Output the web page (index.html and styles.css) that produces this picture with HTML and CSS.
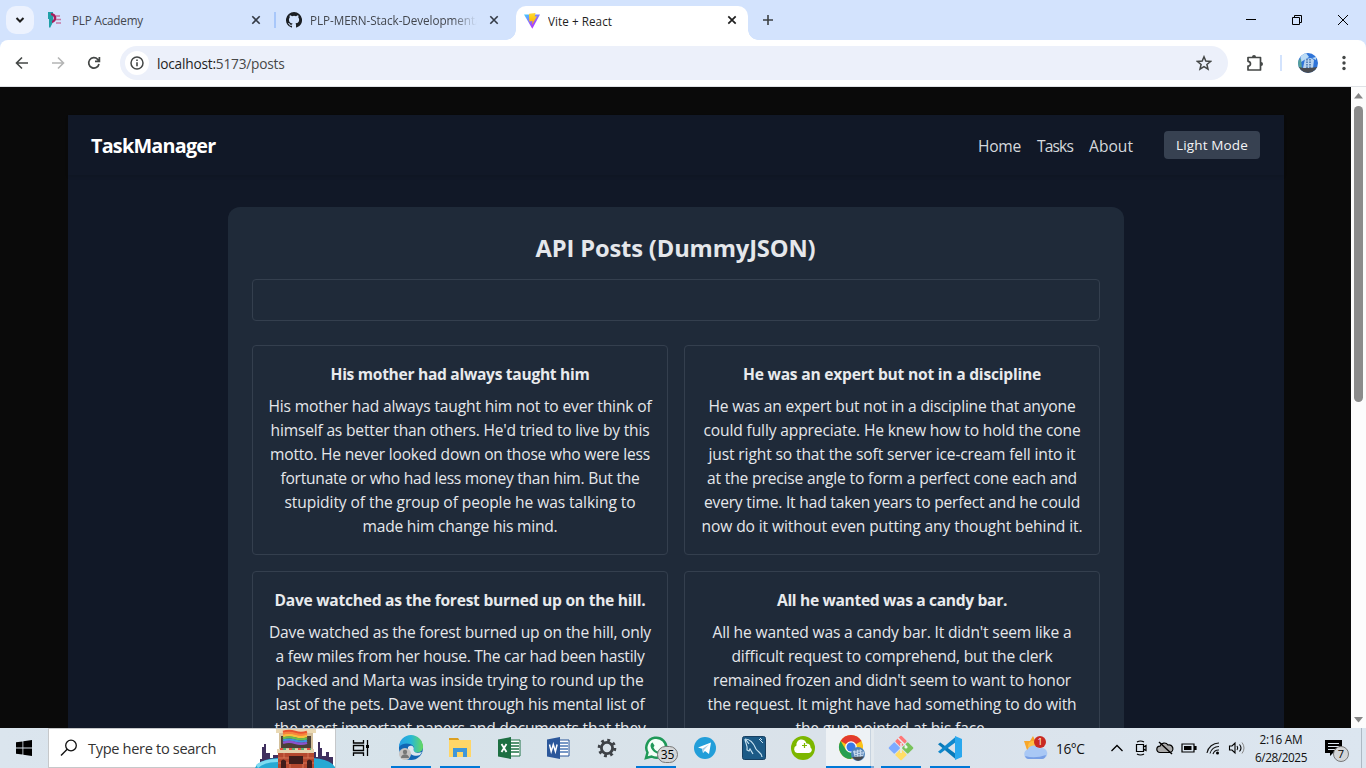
FILE: index.html
```html
<!DOCTYPE html>
<html lang="en">
<head>
<meta charset="utf-8">
<title>Vite + React</title>
<link rel="stylesheet" href="styles.css">
</head>
<body>
<div class="tabstrip">
  <div class="tabsearch"><svg width="12" height="12" viewBox="0 0 12 12"><path d="M2.500 4l3.500 3.500L9.500 4" fill="none" stroke="#1f1f1f" stroke-width="2"/></svg></div>
  <div class="tab tab-first">
    <svg class="fav" width="16" height="16" viewBox="0 0 16 16"><path d="M0 0h5v10l-3 6-1-1V7H0z" fill="#20a0a8"/><path d="M3 1c7 0 7 9 1 10V9c3-2 2-5-1-6z" fill="#a81e5c"/><path d="M8 4h4M8 7.500h5M8 11h5" stroke="#c778a4" stroke-width="1.500"/></svg>
    <span class="tabname"><span data-w="71">PLP Academy</span></span>
    <svg class="x" width="10" height="10" viewBox="0 0 10 10"><path d="M1.300 1.300l7.400 7.400M8.700 1.300L1.300 8.700" stroke="#333a45" stroke-width="1.600"/></svg>
  </div>
  <div class="sep"></div>
  <div class="tab tab-second">
    <svg class="fav" width="16" height="16" viewBox="0 0 16 16"><path fill="#1b1f24" d="M8 0a8 8 0 0 0-2.530 15.590c.4.070.550-.170.550-.380v-1.490c-2.010.370-2.530-.490-2.690-.940-.090-.230-.480-.940-.820-1.130-.280-.150-.680-.520-.010-.530.630-.010 1.080.580 1.230.820.720 1.210 1.870.870 2.330.660.070-.520.280-.870.510-1.070-1.780-.2-3.640-.890-3.640-3.950 0-.870.310-1.590.820-2.150-.080-.2-.360-1.020.080-2.120 0 0 .670-.210 2.200.820a7.500 7.500 0 0 1 4 0c1.530-1.040 2.200-.820 2.200-.820.440 1.100.160 1.920.080 2.120.510.560.820 1.270.820 2.150 0 3.070-1.870 3.750-3.650 3.950.290.250.540.730.540 1.480v2.200c0 .210.150.460.550.380A8 8 0 0 0 8 0z"/></svg>
    <span class="tabname fade"><span data-w="165">PLP-MERN-Stack-Development</span>/</span>
    <svg class="x" width="10" height="10" viewBox="0 0 10 10"><path d="M1.300 1.300l7.400 7.400M8.700 1.300L1.300 8.700" stroke="#333a45" stroke-width="1.600"/></svg>
  </div>
  <div class="tab tab-active">
    <svg class="fav" width="16" height="16" viewBox="0 0 16 16"><defs><linearGradient id="v" x1="0" x2=".7" y1="0" y2="1"><stop stop-color="#41d1ff"/><stop offset=".7" stop-color="#a04cfe"/><stop offset="1" stop-color="#bd34fe"/></linearGradient><linearGradient id="b" x1="0" x2="0" y1="0" y2="1"><stop stop-color="#ffd83a"/><stop offset=".3" stop-color="#ffcf20"/><stop offset="1" stop-color="#ffa800"/></linearGradient></defs><path d="M0 1.500L16 1.500 8.300 15.700z" fill="url(#v)"/><path d="M5 .800L11.500 0l-.800 3.500 2.300-.300L8 12l.600-4-3.300.400z" fill="url(#b)"/></svg>
    <span class="tabname dark"><span data-w="64">Vite + React</span></span>
    <svg class="x" width="10" height="10" viewBox="0 0 10 10"><path d="M1.300 1.300l7.400 7.400M8.700 1.300L1.300 8.700" stroke="#1f1f1f" stroke-width="1.700"/></svg>
  </div>
  <svg class="plus" width="12" height="12" viewBox="0 0 12 12"><path d="M6 1v10M1 6h10" stroke="#3c4043" stroke-width="1.600"/></svg>
  <div class="winbtns">
    <svg width="12" height="12" viewBox="0 0 12 12"><path d="M1 5.500h10" stroke="#000"/></svg>
    <svg width="12" height="12" viewBox="0 0 12 12"><path d="M1.500 3.500h7v7h-7zM3.500 3.500v-2h7v7h-2" fill="none" stroke="#000"/></svg>
    <svg width="12" height="12" viewBox="0 0 12 12"><path d="M1 1l10 10M11 1L1 11" stroke="#000"/></svg>
  </div>
</div>
<div class="toolbarwrap">
<div class="toolbar">
  <svg class="nav-ic" width="14" height="14" viewBox="0 0 14 14"><path d="M13 7H2M7 1.500L1.500 7 7 12.500" fill="none" stroke="#444746" stroke-width="1.600"/></svg>
  <svg class="nav-ic" width="14" height="14" viewBox="0 0 14 14"><path d="M1 7h11M7 1.500L12.500 7 7 12.500" fill="none" stroke="#b4b5b5" stroke-width="1.600"/></svg>
  <svg class="nav-ic" width="14" height="14" viewBox="0 0 14 14"><path d="M12 8A5.200 5.200 0 1 1 10.700 3.300L12.300 5M12.400 1v4.300H8" fill="none" stroke="#444746" stroke-width="1.700"/></svg>
  <div class="omnibox">
    <div class="info"><svg width="14" height="14" viewBox="0 0 14 14"><circle cx="7" cy="7" r="6" fill="none" stroke="#444746" stroke-width="1.500"/><path d="M7 6.200v4M7 3.600v1.500" stroke="#444746" stroke-width="1.600"/></svg></div>
    <span class="url" data-w="127.500"><b>localhost:</b>5173/posts</span>
    <svg class="star" width="16" height="16" viewBox="0 0 16 16"><path d="M8 1.800l1.800 4.300 4.700.400-3.600 3 1.100 4.600-4-2.500-4 2.500 1.100-4.600-3.600-3 4.700-.400z" fill="none" stroke="#444746" stroke-width="1.500"/></svg>
  </div>
  <svg class="ext" width="18" height="18" viewBox="0 0 18 18"><path d="M2 3.500h12.500V16H2v-3.800c3.300-.200 3.300-4.700 0-4.900z" fill="none" stroke="#444746" stroke-width="1.700" stroke-linejoin="round"/><path d="M6 3a2 2 0 0 1 4 0zM15 8a2 2 0 0 1 0 4z" fill="#444746"/></svg>
  <div class="tsep"></div>
  <svg class="avatar" width="20" height="20" viewBox="0 0 20 20"><defs><clipPath id="c"><circle cx="10" cy="10" r="10"/></clipPath></defs><g clip-path="url(#c)"><path d="M0 0h20v20H0z" fill="#2f74d8"/><path d="M2 0h6l3 4-8 5zM14 5l4-1v3z" fill="#bcdcf5"/><path d="M0 7l3-1 1 9H0z" fill="#57a09a"/><path d="M7 6l6-1 3 2-1 8H5z" fill="#b9d3ed"/><path d="M9 6v9M12 6v9" stroke="#24599b" stroke-width="1.200" stroke-dasharray="1.500 1"/><path d="M0 14l6 1 5 0 9-1v7H0z" fill="#4a4c50"/></g></svg>
  <svg class="dots" width="4" height="16" viewBox="0 0 4 16"><g fill="#444746"><circle cx="2" cy="2.500" r="1.700"/><circle cx="2" cy="8" r="1.700"/><circle cx="2" cy="13.500" r="1.700"/></g></svg>
</div>
</div>
<div class="viewport">
  <div class="page">
    <div class="app">
      <header class="header">
        <h1 data-w="124.500">TaskManager</h1>
        <nav><a data-w="43">Home</a><a data-w="36">Tasks</a><a data-w="44">About</a></nav>
        <button class="mode"><span data-w="72">Light Mode</span></button>
      </header>
      <main class="panel">
        <h2><span data-w="280">API Posts (DummyJSON)</span></h2>
        <div class="search"></div>
        <div class="grid">
          <article><h3><span data-w="259">His mother had always taught him</span></h3><p><span data-w="383">His mother had always taught him not to ever think of</span><br><span data-w="379">himself as better than others. He'd tried to live by this</span><br><span data-w="380">motto. He never looked down on those who were less</span><br><span data-w="359">fortunate or who had less money than him. But the</span><br><span data-w="351">stupidity of the group of people he was talking to</span><br><span data-w="195">made him change his mind.</span></p></article>
          <article><h3><span data-w="298">He was an expert but not in a discipline</span></h3><p><span data-w="367">He was an expert but not in a discipline that anyone</span><br><span data-w="377">could fully appreciate. He knew how to hold the cone</span><br><span data-w="367">just right so that the soft server ice-cream fell into it</span><br><span data-w="370">at the precise angle to form a perfect cone each and</span><br><span data-w="376">every time. It had taken years to perfect and he could</span><br><span data-w="381">now do it without even putting any thought behind it.</span></p></article>
          <article><h3><span data-w="371">Dave watched as the forest burned up on the hill.</span></h3><p><span data-w="382">Dave watched as the forest burned up on the hill, only</span><br><span data-w="369">a few miles from her house. The car had been hastily</span><br><span data-w="367">packed and Marta was inside trying to round up the</span><br><span data-w="369">last of the pets. Dave went through his mental list of</span><br><span data-w="371">the most important papers and documents that they</span></p></article>
          <article><h3><span data-w="230">All he wanted was a candy bar.</span></h3><p><span data-w="359">All he wanted was a candy bar. It didn't seem like a</span><br><span data-w="321">difficult request to comprehend, but the clerk</span><br><span data-w="358">remained frozen and didn't seem to want to honor</span><br><span data-w="369">the request. It might have had something to do with</span><br><span data-w="193">the gun pointed at his face.</span></p></article>
        </div>
      </main>
    </div>
  </div>
  <div class="scroll">
    <svg width="9" height="6" viewBox="0 0 9 6"><path d="M0 5.500L4.500 0 9 5.500z" fill="#858585"/></svg>
    <div class="thumb"></div>
    <svg class="down" width="9" height="6" viewBox="0 0 9 6"><path d="M0 0L4.500 5.500 9 0z" fill="#858585"/></svg>
  </div>
</div>
<div class="taskbar">
  <div class="start"><svg width="16" height="16" viewBox="0 0 16 16"><path d="M0 2.300L6.500 1.400v6.200H0zM7.300 1.300L16 0v7.600H7.300zM0 8.400h6.500v6.200L0 13.700zM7.300 8.400H16V16l-8.700-1.300z"/></svg></div>
  <div class="find">
    <svg class="mag" width="18" height="18" viewBox="0 0 18 18"><circle cx="11" cy="6.500" r="5.300" fill="none" stroke="#111" stroke-width="1.300"/><path d="M7.200 10.300L1 16.500" stroke="#111" stroke-width="1.400"/></svg>
    <span data-w="128">Type here to search</span>
    <svg class="art" width="80" height="39" viewBox="0 0 80 39"><path d="M5 36v-6h2v-12h2v-3h2v9h4v5h3v-3h6v11zM58 36v-13h3v5h2v-15h2v6h2v8h4v-4h3v5h4v8z" fill="#40305f"/><path d="M0 39q4-9 22-10h36q17 1 22 9v1z" fill="#27a9d3"/><path d="M1 36q7-6 22-6v3q-14 0-20 6z" fill="#7fdbf1"/><path d="M24 4h34v21H24z" fill="#d3bf9a"/><path d="M21 0h40v4H21z" fill="#ead9b4"/><path d="M26 7h30v12H26z" fill="#4a4038"/><path d="M22 20h37v4H22z" fill="#e5d3ae"/><path d="M23 24h36v15H23z" fill="#b5492f"/><path d="M23 29h36M23 34h36M29 24v5M53 24v5M35 34v5M48 34v5" stroke="#df8260" stroke-width=".8"/><path d="M34 27h14v8H34zM26 39v-7q2-3 5 0v7zM52 39v-7q2-3 5 0v7z" fill="#3f1d1b"/><g fill="none" stroke-width="2.400"><path d="M28 3q6-2 12 0t12 0" stroke="#e9532f"/><path d="M28 5q6-2 12 0t12 0" stroke="#f7843d"/><path d="M28 7.200q6-2 12 0t12 0" stroke="#f9bf3b"/><path d="M28 9.400q6-2 12 0t12 0" stroke="#69be4f"/><path d="M28 11.600q6-2 12 0t12 0" stroke="#3e93df"/><path d="M28 13.800q6-2 12 0t12 0" stroke="#8b52cd"/></g><path d="M25 20h32" stroke="#e65442" stroke-width="2" stroke-dasharray="3 6"/><path d="M28 20h28" stroke="#5aae75" stroke-width="2" stroke-dasharray="3 6"/></svg>
  </div>
  <div class="apps">
    <div class="ap"><svg width="18" height="18" viewBox="0 0 18 18"><path d="M1.500 1v3h10V1M1.500 6.500h10v5h-10zM1.500 17v-3h10v3M15.500 1v16" fill="none" stroke="#000" stroke-width="1.300"/><path d="M14 6h3v3h-3z"/></svg></div>
    <div class="ap on"><svg width="26" height="26" viewBox="0 0 26 26"><defs><linearGradient id="e" x1="0" x2="1"><stop stop-color="#269ee6"/><stop offset=".5" stop-color="#28b7d5"/><stop offset="1" stop-color="#66d95d"/></linearGradient></defs><circle cx="13" cy="13" r="12" fill="#1166b4"/><path d="M1 12A12 12 0 0 1 25 12c0 6-8 7-10 4 5-6-8-11-14-4z" fill="url(#e)"/><path d="M10 12c3-3 7-.500 5.500 3 1 4 6 3 8.500 2l-2 3c-4 2-11 0-12-5z" fill="#dce6ef"/><circle cx="7" cy="19" r="6" fill="#c5c2c1"/><circle cx="7" cy="17" r="2.200" fill="#777"/><path d="M3 23c0-5 8-5 8 0z" fill="#777"/></svg></div>
    <div class="ap on"><svg width="24" height="22" viewBox="0 0 24 22"><path d="M1 1h9l2 3H1z" fill="#dca021"/><path d="M1 3h22v17H1z" fill="#ffd667"/><path d="M5 20v-9h14v9h-4v-5H9v5z" fill="#3f97d9"/></svg></div>
    <div class="ap"><svg width="24" height="22" viewBox="0 0 24 22"><path d="M12 3h11v16H12z" fill="#fff" stroke="#217346"/><path d="M14 6h8M14 9h8M14 12h8M14 15h8" stroke="#217346" stroke-width="1.500"/><path d="M1 2.500L14 0v22L1 19.500z" fill="#1d6f42"/><path d="M4.500 7l5 8M9.500 7l-5 8" stroke="#fff" stroke-width="1.800"/></svg></div>
    <div class="ap"><svg width="24" height="22" viewBox="0 0 24 22"><path d="M12 3h11v16H12z" fill="#fff" stroke="#2b579a"/><path d="M14 6h8M14 9h8M14 12h8M14 15h8" stroke="#4c78b5" stroke-width="1.300"/><path d="M1 2.500L14 0v22L1 19.500z" fill="#2b579a"/><path d="M3.500 7.500l1.700 7 2.100-7 2.100 7 1.700-7" fill="none" stroke="#fff" stroke-width="1.500"/></svg></div>
    <div class="ap"><svg width="20" height="20" viewBox="0 0 20 20"><circle cx="10" cy="10" r="5.600" fill="none" stroke="#3e4247" stroke-width="2.800"/><circle cx="10" cy="10" r="7.800" fill="none" stroke="#3e4247" stroke-width="3" stroke-dasharray="2.800 3.326"/></svg></div>
    <div class="ap on"><svg width="24" height="24" viewBox="0 0 24 24"><path d="M2 22l1.500-5.500a10 10 0 1 1 4 4z" fill="#f4fff8" stroke="#1f9958" stroke-width="2.500"/><path d="M8.500 6.500l2 3-1 2c1 2 2 3 4 4l2-1.500 2.500 1.500c0 3-4 3-6 1.500-3-1.500-5-4-5.500-7 0-2 1-4 4-3.500z" fill="#1f9958"/></svg><span class="badge b35">35</span></div>
    <div class="ap"><svg width="22" height="22" viewBox="0 0 22 22"><circle cx="11" cy="11" r="11" fill="#229ed9"/><path d="M4 10.500L17 5.500l-2 11.500-4-3-2 2-.800-4.300z" fill="#fff"/><path d="M8.200 11.700L15 7.500l-5 5.500-1 3z" fill="#a9cde5"/></svg></div>
    <div class="ap"><svg width="24" height="24" viewBox="0 0 24 24"><rect x=".5" y=".5" width="23" height="23" rx="2" fill="#1c5a86" stroke="#173f61"/><path d="M3 3c6 0 9 5 11 10 2 3 6 4 6 8M3 3c0 4 3 6 2 11l2 1 1-2 3 5M4 4l3 4" fill="none" stroke="#c9e3f1" stroke-width="1.200"/><path d="M17 3l4 4M18 2l2 2" stroke="#c9e3f1"/></svg></div>
    <div class="ap"><svg width="24" height="24" viewBox="0 0 24 24"><circle cx="12" cy="12" r="12" fill="#7db700"/><path d="M6 17a4 4 0 0 1-.500-7.500 5 5 0 0 1 10-2 4 4 0 0 1 4 4 3 3 0 0 1-1.500 5.500z" fill="#fff"/><path d="M13.500 7v5M11 9.500h5" stroke="#7db700" stroke-width="1.200"/></svg></div>
    <div class="ap current"><svg width="28" height="28" viewBox="0 0 28 28"><circle cx="13" cy="13" r="12" fill="#fbc116"/><path d="M13 13L2.600 7A12 12 0 0 1 23.400 7z" fill="#e33b2e"/><path d="M2.600 7A12 12 0 0 0 13 25l5-9-5 2-5-2z" fill="#269f50"/><circle cx="13" cy="13" r="5.800" fill="#fff"/><circle cx="13" cy="13" r="4.500" fill="#3979e8"/><circle cx="20" cy="20" r="7" fill="#4d83bb"/><path d="M15 17l7-2 4 3-1 5-8 1z" fill="#c3d7ed"/><path d="M18 16v8M21 15v9M24 17v6" stroke="#315f95" stroke-dasharray="1.500 1"/><path d="M14 23l12-.500q-5 8-12 .500z" fill="#46494e"/></svg></div>
    <div class="ap on"><svg width="26" height="26" viewBox="0 0 26 26"><g transform="rotate(45 13 13)"><rect x="4" y="4" width="8.500" height="8.500" rx="1" fill="#ff7777"/><rect x="13.500" y="4" width="8.500" height="8.500" rx="1" fill="#78c35b"/><rect x="4" y="13.500" width="8.500" height="8.500" rx="1" fill="#7dabff"/><rect x="13.500" y="13.500" width="8.500" height="8.500" rx="1" fill="#ffdd66"/></g><path d="M10 3l8 8M13 8v10" stroke="#e8edf1" stroke-width="1.500"/><circle cx="18" cy="12" r="1.600" fill="#eef5ed"/></svg></div>
    <div class="ap on"><svg width="24" height="24" viewBox="0 0 24 24"><path d="M0 8.300l2.300-1.800L18 18v5.500z" fill="#087ab9"/><path d="M0 15.700l2.300 1.800L18 6V.500z" fill="#1088cc"/><path d="M17 0l7 3v18l-7 3z" fill="#2aa8ee"/></svg></div>
  </div>
  <div class="weather"><svg width="26" height="26" viewBox="0 0 26 26"><path d="M2 6l6 0 3-5 3 6v8H5z" fill="#f8a72b"/><circle cx="11" cy="11" r="5" fill="#ffbe42"/><path d="M6 24a5 5 0 0 1-.500-9.500 7 7 0 0 1 12-1 5.500 5.500 0 1 1 2.500 10.500z" fill="#a9c8f5"/><path d="M3 21q10 3 21-1-1 4-4 4H6q-2 0-3-3z" fill="#789fe5"/></svg><span class="red">1</span><span data-w="28.500">16°C</span></div>
  <div class="tray">
    <div><svg width="14" height="8" viewBox="0 0 14 8"><path d="M1.500 7L7 1.500 12.500 7" fill="none" stroke="#000" stroke-width="1.300"/></svg></div>
    <div><svg width="16" height="16" viewBox="0 0 16 16"><path d="M3.500 4.500h7v7h-7zM10.500 7l2.500-1.500v5L10.500 9M4 2q3.500-2 7 0M4 14q3.500 2 7 0" fill="none" stroke="#000" stroke-width="1.200"/></svg></div>
    <div><svg width="18" height="14" viewBox="0 0 18 14"><path d="M4 11.500a3.200 3.200 0 0 1 0-6.400A4.500 4.500 0 0 1 12 4a3.800 3.800 0 0 1 2 7.500z" fill="#aaa" stroke="#000" stroke-width="1.200"/><path d="M3 1l13 12" stroke="#000" stroke-width="1.400"/></svg></div>
    <div><svg width="16" height="10" viewBox="0 0 16 10"><path d="M1 1h12v8H1zM14 3.500h1v3h-1z" fill="none" stroke="#000" stroke-width="1.200"/><path d="M3 3h7.500v4H3z"/></svg></div>
    <div><svg width="14" height="14" viewBox="0 0 14 14"><path d="M1 12A12 12 0 0 1 13 2M4 12.500a9 9 0 0 1 9-7M7 13a6 6 0 0 1 6-4" fill="none" stroke="#111" stroke-width="1.100"/><circle cx="11.500" cy="12" r="1.500"/></svg></div>
    <div><svg width="18" height="14" viewBox="0 0 18 14"><path d="M1.500 5H4l3-3v10L4 9H1.500zM9 5q1.500 2 0 4M11.500 3.500q3 3.500 0 7" fill="none" stroke="#000" stroke-width="1.100"/><path d="M14 1.500q4 5.500 0 11" fill="none" stroke="#888"/></svg></div>
  </div>
  <div class="clock"><span data-w="43">2:16 AM</span><br><span data-w="52">6/28/2025</span></div>
  <div class="notif"><svg width="17" height="17" viewBox="0 0 17 17"><path d="M0 0h17v13H8l-3 3v-3H0z"/><path d="M3 3.500h11M3 6.500h11M3 9.500h7" stroke="#dce6ef"/></svg><span class="badge b7">7</span></div>
  <div class="peek"></div>
</div>
<script src="fit.js"></script>
</body>
</html>
```
FILE: fit.js
```js
// Spread each text run over its designed width.
document.querySelectorAll('[data-w]').forEach(function (el) {
  var want = parseFloat(el.dataset.w);
  var have = el.getBoundingClientRect().width;
  el.style.letterSpacing = (want - have) / el.textContent.length + 'px';
});
```
FILE: styles.css
```css
* { box-sizing: border-box; }
html, body { margin: 0; height: 768px; overflow: hidden; }
body { font-family: "Open Sans", "Noto Sans", sans-serif; font-size: 15.6px; display: flex; flex-direction: column; background: #fff; }
svg { display: block; flex: none; }
[data-w] { white-space: nowrap; }

.tabstrip { height: 40px; flex: none; background: #d3e3fd; display: flex; align-items: center; padding-left: 6px; font-size: 11.7px; color: #43474e; }
.tabsearch { width: 28px; height: 28px; border-radius: 10px; background: #ecf2fe; display: grid; place-items: center; }
.tab { display: flex; align-items: center; height: 40px; }
.tab .fav { margin-right: 8px; }
.tabname { flex: 1; white-space: nowrap; overflow: hidden; line-height: 20px; }
.tab-first { width: 226px; margin-left: 14px; padding-right: 13px; }
.tab-second { width: 213px; margin-left: 10px; }
.fade { -webkit-mask-image: linear-gradient(90deg, #000 85%, transparent 100%); mask-image: linear-gradient(90deg, #000 85%, transparent 100%); }
.tab-second .x { margin-left: 12px; }
.sep { width: 2px; height: 16px; background: #a8c7fa; }
.tab-active { position: relative; align-self: flex-end; width: 232px; height: 34px; margin-left: 17px; padding: 0 11px 6px 8px; background: #fff; border-radius: 10px 10px 0 0; }
.tab-active .tabname, .tab-active .fav { margin-top: 1px; }
.tab-active::before, .tab-active::after { content: ""; position: absolute; bottom: 0; width: 10px; height: 10px; }
.tab-active::before { left: -10px; background: radial-gradient(circle at 0 0, transparent 9.5px, #fff 10px); }
.tab-active::after { right: -10px; background: radial-gradient(circle at 100% 0, transparent 9.5px, #fff 10px); }
.dark { color: #1f1f1f; }
.plus { margin-left: 14px; }
.winbtns { margin-left: auto; display: flex; gap: 34px; padding-right: 17px; }

.toolbarwrap { background: #d3e3fd; flex: none; }
.toolbar { height: 47px; background: #fff; border-bottom: 1px solid #dfe2e6; border-radius: 8px 8px 0 0; display: flex; align-items: center; padding: 0 20px 0 15px; }
.nav-ic { margin-right: 22px; }
.omnibox { width: 1108px; height: 34px; border-radius: 17px; background: #ecf0fa; display: flex; align-items: center; padding: 0 16px 0 5px; margin-left: -3px; flex: none; }
.info { width: 24px; height: 24px; border-radius: 50%; background: #fff; display: grid; place-items: center; margin-right: 8px; }
.url { font-size: 13.7px; color: #474747; }
.url b { font-weight: 400; color: #1f1f1f; }
.star { margin-left: auto; }
.ext { margin-left: 18px; }
.tsep { width: 2px; height: 16px; background: #d3e3fd; margin-left: 16px; }
.avatar { margin-left: 16px; }
.dots { margin-left: auto; }

.viewport { height: 641px; flex: none; display: flex; overflow: hidden; }
.page { flex: 1; background: #0a0a0a; padding: 28px 67px 0 68px; }
.app { background: #111827; height: 900px; color: #f3f4f6; }
.header { height: 60px; padding: 2px 24px 0; display: flex; align-items: center; box-shadow: 0 2px 3px rgba(0, 0, 0, .1); }
.header h1 { margin: 0 0 0 -1px; font-size: 19.8px; line-height: 28px; color: #fff; }
nav { margin-left: auto; margin-top: -1px; display: flex; gap: 16px; margin-right: 31px; color: #d5d8dd; }
.mode { width: 96px; height: 28px; margin-top: -2px; padding: 0; border: 0; border-radius: 4px; background: #374151; color: #f3f4f6; font: 13.5px/20px "Open Sans", sans-serif; }
.panel { width: 896px; height: 800px; margin: 32px auto 0; padding: 24px; border-radius: 12px; background: #1f2a39; text-align: center; }
h2 { margin: 0 0 16px; font-size: 23.7px; line-height: 34px; height: 32px; color: #e5e7eb; }
h2 span { margin-right: 1px; }
.search { height: 42px; border: 1px solid #343f4e; border-radius: 4px; margin-bottom: 24px; }
.grid { display: grid; grid-template-columns: 416px 416px; gap: 16px; }
article { height: 210px; border: 1px solid #343f4e; border-radius: 4px; padding: 16px 10px; }
h3 { margin: 0 0 8px; font-size: 15.6px; line-height: 24px; color: #e8eaed; }
article p { margin: 0; line-height: 24px; white-space: nowrap; color: #e5e7eb; }
.scroll { width: 15px; background: #fcfcfc; display: flex; flex-direction: column; align-items: center; padding: 6px 0 5px; }
.thumb { width: 9px; height: 296px; margin-top: 7px; border-radius: 5px; background: #8b8b8b; }
.down { margin-top: auto; }

.taskbar { height: 40px; flex: none; display: flex; background: linear-gradient(90deg, #dbe5ee, #d7e3ea 30%, #dae2ea 60%, #dce6f0); color: #111; }
.start { width: 48px; display: grid; place-items: center; }
.find { width: 288px; border: 1px solid #c6c8ca; background: #fff; display: flex; align-items: center; padding-left: 11px; font-size: 14.6px; color: #333; }
.mag { margin-right: 10px; }
.find .art { margin-left: auto; }
.apps { display: flex; padding-left: 1px; }
.ap { position: relative; width: 49px; display: grid; place-items: center; }
.ap:first-child { margin-left: -1px; margin-right: 1px; }
.on::after { content: ""; position: absolute; left: 5px; bottom: 0; width: 40px; height: 2px; background: #0078d7; }
.current { background: linear-gradient(90deg, #eef2f5 44px, #c7d3df 44px 45px, #e3e9ee 45px 48px, transparent 48px); margin-left: -1px; margin-right: 1px; }
.current svg { margin-left: 2px; }
.current::after { content: ""; position: absolute; left: 0; bottom: 0; width: 48px; height: 2px; background: linear-gradient(90deg, #0078d7 45px, #76a9d9 45px); }
.badge { position: absolute; border: 1px solid #777; background: #d4d6d8; color: #000; border-radius: 10px; text-align: center; }
.b35 { left: 26px; top: 18px; width: 21px; height: 17px; font-size: 12px; line-height: 15px; }
.weather { position: relative; display: flex; align-items: center; width: 68px; margin-left: 48px; font-size: 13.7px; white-space: nowrap; }
.weather svg { margin-right: 8px; }
.red { position: absolute; left: 12px; top: 8px; width: 12px; height: 12px; border-radius: 50%; background: #c92a22; color: #fff; font-size: 9px; line-height: 12px; text-align: center; }
.tray { display: flex; margin-left: 15px; }
.tray div { width: 24px; display: grid; place-items: center; }
.clock { width: 64px; text-align: center; font-size: 11.8px; line-height: 18px; padding-top: 2px; }
.notif { position: relative; padding: 12px 0 0 12px; width: 48px; }
.b7 { left: 20px; top: 18px; width: 16px; height: 16px; font-size: 11px; line-height: 14px; }
.peek { margin-left: auto; width: 5px; border-left: 1px solid #aeb9c4; }
```
